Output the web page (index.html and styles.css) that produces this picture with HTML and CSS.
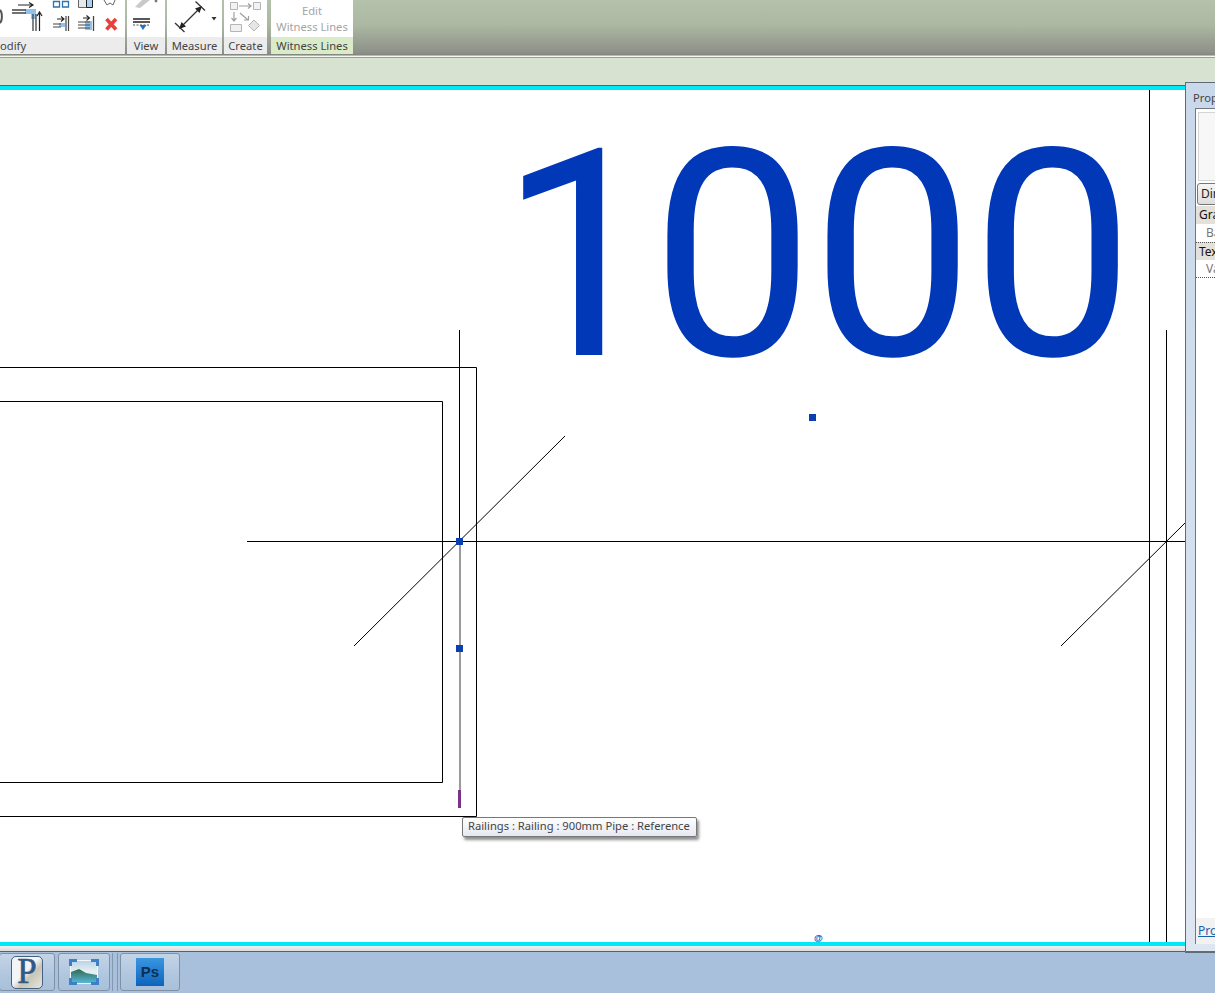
FILE: index.html
```html
<!DOCTYPE html>
<html lang="en">
<head>
<meta charset="utf-8">
<title>Witness Lines</title>
<link rel="stylesheet" href="styles.css">
</head>
<body>
<div class="app">
  <header class="ribbon">
    <section class="panel panel-modify">
      <div class="panel-body">
        <svg class="icon-fill" viewBox="0 0 125 37" width="125" height="37">
          <path d="M0 10a3 7 0 0 1 0 13" fill="none" stroke="#555" stroke-width="2"/>
          <path d="M18 5h15M29 2.500l4 2.500-4 2.500" fill="none" stroke="#222" stroke-width="1.200"/>
          <path d="M25 9h11v10h-5v-5h-6z" fill="#8fc3ee"/>
          <path d="M12 10h14M12 13h14" stroke="#444" stroke-width="1.300"/>
          <path d="M33 14v17M36 14v17" stroke="#444" stroke-width="1.300"/>
          <path d="M39.500 31v-18M37 16l2.500-4 2.500 4" fill="none" stroke="#222" stroke-width="1.200"/>
          <path d="M53.500 1.500h6v5.500h-6zM62.500 1.500h6v5.500h-6z" fill="#fff" stroke="#2a73b5" stroke-width="1.300"/>
          <path d="M78.500 0v7.500h8v-7.500" fill="#e6e9ec" stroke="#666"/>
          <path d="M86.500 0v7.500h6v-7.500" fill="#a9d0f0" stroke="#222"/>
          <path d="M104 0l3 5 3-2 3 2 2-5" fill="#fff" stroke="#666"/>
          <path d="M57 19h7M61 16.500l3 2.500-3 2.500" fill="none" stroke="#222" stroke-width="1.100"/>
          <path d="M59 23h6v4h-6z" fill="#8fc3ee"/>
          <path d="M53 24h8M53 27h8" stroke="#444"/>
          <path d="M66 16v15M68.500 16v15" stroke="#444" stroke-width="1.200"/>
          <path d="M83 18h6M86.500 15.500l3 2.500-3 2.500" fill="none" stroke="#222" stroke-width="1.100"/>
          <path d="M85 21h7v9h-7z" fill="#8fc3ee"/>
          <path d="M78 22h12M78 25h12M78 28h12" stroke="#444"/>
          <path d="M93.500 16v15" stroke="#444" stroke-width="1.300"/>
          <path d="M106.500 19l9.500 10.500M116 19l-9.500 10.500" stroke="#e8403a" stroke-width="3.600"/>
        </svg>
      </div>
      <div class="panel-label panel-label-cut">odify</div>
    </section>
    <section class="panel panel-view">
      <div class="panel-body">
        <svg class="icon-fill" viewBox="0 0 38 37" width="38" height="37">
          <path d="M8 7l7-7h8l-10 8z" fill="#c9c9c9"/>
          <circle cx="29" cy="1" r="1.400" fill="#777"/>
          <path d="M6 19h17M6 22h17" stroke="#222" stroke-width="1.300"/>
          <path d="M6 25h17" stroke="#555" stroke-dasharray="2 1.500"/>
          <path d="M12.500 25h7l-3.500 5z" fill="#1e73c8"/>
        </svg>
      </div>
      <div class="panel-label">View</div>
    </section>
    <section class="panel panel-measure">
      <div class="panel-body">
        <svg class="icon-fill" viewBox="0 0 55 37" width="55" height="37">
          <path d="M13 28L34 7" stroke="#333" stroke-width="1.200"/>
          <path d="M12 29l2.500-7 4.500 4.500zM35 6l-7 2.500 4.500 4.500z" fill="#222"/>
          <path d="M8 23l9.500 9M28.500 1.500l9.500 9" stroke="#333" stroke-width="1.300"/>
          <path d="M44.500 17h5l-2.500 3.500z" fill="#333"/>
        </svg>
      </div>
      <div class="panel-label">Measure</div>
    </section>
    <section class="panel panel-create">
      <div class="panel-body">
        <svg class="icon-fill" viewBox="0 0 43 37" width="43" height="37">
          <path d="M6.500 2.500h7v7h-7zM29.500 2.500h7v7h-7z" fill="#f2f2f2" stroke="#b5b5b5"/>
          <path d="M15 6h12M24 3.500l3 2.500-3 2.500M10 12v9M7.500 18l2.500 3 2.500-3M16 13l8 7M20 20h4.500v-4" fill="none" stroke="#a0a0a0" stroke-width="1.200"/>
          <path d="M6.500 24.500h11v7h-11z" fill="#f0f0f0" stroke="#b5b5b5"/>
          <path d="M30 20l5.500 5.500-5.500 5.500-5.500-5.500z" fill="#e6e6e6" stroke="#b5b5b5"/>
        </svg>
      </div>
      <div class="panel-label">Create</div>
    </section>
    <section class="panel panel-witness">
      <div class="panel-body witness-body">Edit<br>Witness Lines</div>
      <div class="panel-label panel-label-green">Witness Lines</div>
    </section>
  </header>

  <div class="ribbon-edge"></div>
  <div class="options-bar"></div>

  <main class="viewport">
    <svg class="drawing" viewBox="0 0 1185 852" width="1185" height="852">
      <text class="dim-text" x="499" y="265"><tspan>1</tspan><tspan dx="-8">000</tspan></text>
      <g class="ln">
        <path d="M0 277.500H476.500V726.500H0"/>
        <path d="M0 311.500H442.500V692.500H0"/>
        <path d="M459.500 240V451"/>
        <path d="M247 451.500H1185"/>
        <path d="M354 556L565 346"/>
        <path d="M1061 556L1185 433"/>
        <path d="M1149.500 0V852"/>
        <path d="M1166.500 240V852"/>
      </g>
      <path class="ln-grey" d="M460 451V700"/>
      <path class="ln-purple" d="M459.500 700V718"/>
      <rect class="grip" x="456" y="448" width="7" height="7"/>
      <rect class="grip" x="456" y="555" width="7" height="7"/>
      <rect class="grip" x="809" y="324" width="7" height="7"/>
      <text class="at" x="814" y="851">@</text>
    </svg>
  </main>

  <div class="status-edge"></div>

  <footer class="taskbar">
    <button class="task task-p" type="button">
      <span class="p-logo">P</span>
    </button>
    <button class="task task-photo" type="button">
      <svg viewBox="0 0 32 28" width="32" height="28">
        <defs>
          <linearGradient id="sky" x1="0" y1="0" x2="0" y2="1">
            <stop offset="0" stop-color="#b9d4ea"/>
            <stop offset="0.45" stop-color="#e6eef0"/>
            <stop offset="1" stop-color="#e4f2f4"/>
          </linearGradient>
          <linearGradient id="sea" x1="0" y1="0" x2="0" y2="1">
            <stop offset="0" stop-color="#2f6a50"/>
            <stop offset="1" stop-color="#58b8d8"/>
          </linearGradient>
        </defs>
        <rect x="2" y="2" width="28" height="24" fill="#f4f7fa"/>
        <rect x="3" y="3" width="26" height="22" fill="url(#sky)"/>
        <path d="M3 14l8-3 7 4 11 2v8H3z" fill="url(#sea)"/>
        <path d="M1 1h8v3H4v4H1zM31 1h-8v3h5v4h3zM1 27h8v-3H4v-4H1zM31 27h-8v-3h5v-4h3z" fill="#3f7fc4"/>
      </svg>
    </button>
    <span class="task-sep"></span>
    <button class="task task-ps" type="button"><span class="ps-logo">Ps</span></button>
  </footer>

  <aside class="props">
    <div class="props-title">Properties</div>
    <div class="props-inner">
      <div class="props-preview"></div>
      <div class="props-select">Dimensions</div>
      <div class="props-group">Graphics</div>
      <div class="props-row">Baseline</div>
      <div class="props-group props-group-dotted">Text</div>
      <div class="props-row props-row-dotted">Value</div>
      <div class="props-spacer"></div>
      <a class="props-link">Properties help</a>
    </div>
  </aside>

  <div class="tooltip">Railings : Railing : 900mm Pipe : Reference</div>
</div>
</body>
</html>
```
FILE: styles.css
```css
* { box-sizing: border-box; }
html, body { margin: 0; padding: 0; }
body { width: 1215px; height: 993px; overflow: hidden; background: #fff; font-family: "Noto Sans", "Open Sans", sans-serif; }
.app { position: relative; width: 1215px; height: 993px; overflow: hidden; display: flex; flex-direction: column; }

.ribbon { height: 55px; display: flex; flex: none; gap: 2px; background: linear-gradient(#b5c2ab 0, #acb8a2 25px, #8e918a 52px, #84877f 55px); }
.panel { height: 54px; display: flex; flex-direction: column; background: #fff; }
.panel-body { height: 37px; flex: none; overflow: hidden; }
.icon-fill { display: block; }
.panel-label { height: 17px; background: #ececec; color: #444; font-size: 11.200px; line-height: 18px; text-align: center; white-space: nowrap; }
.panel-label-cut { text-align: left; }
.panel-modify { width: 125px; }
.panel-view { width: 38px; }
.panel-measure { width: 55px; }
.panel-create { width: 43px; }
.panel-witness { width: 82px; margin-left: 2px; }
.witness-body { color: #a4a4a4; font-size: 11.200px; line-height: 16px; text-align: center; padding-top: 3px; }
.panel-label-green { background: #d9ebc9; }

.ribbon-edge { height: 3px; flex: none; background: #f5f7f1; border-top: 1px solid #a6c88e; border-bottom: 1px solid #9a9f96; }
.options-bar { height: 28px; flex: none; background: #d8e2d0; border-bottom: 1px solid #5b6660; }

.viewport { height: 860px; flex: none; background: #fff; border-top: 4px solid #00e8f6; border-bottom: 4px solid #00e8f6; overflow: hidden; }
.drawing { display: block; }
.dim-text { font-family: Roboto, "Liberation Sans", sans-serif; font-size: 290px; letter-spacing: -2.900px; fill: #0038b8; }
.ln path { fill: none; stroke: #000; stroke-width: 1; }
.ln-grey { stroke: #9a9a9a; stroke-width: 2; fill: none; }
.ln-purple { stroke: #7a3386; stroke-width: 3; fill: none; }
.grip { fill: #0a3fb0; }
.at { font-family: "Liberation Sans", Arial, sans-serif; font-size: 9px; font-weight: 700; fill: #0a3fb0; }

.status-edge { height: 6px; flex: none; background: linear-gradient(#f0f0f0, #dcdcdc); border-bottom: 1px solid #55606a; }
.taskbar { flex: 1; display: flex; align-items: stretch; padding: 1px 0 2px 0; background: #a8c0dc; }
.task { padding: 0; display: flex; align-items: center; justify-content: center; background: linear-gradient(#c4d4e6, #b0c6df 60%, #a9c0da); border: 1px solid #7f91a6; border-radius: 3px; }
.task-p { width: 56px; margin-left: -1px; }
.task-photo { width: 52px; margin-left: 3px; }
.task-sep { width: 6px; border-left: 1px solid #8498b0; border-right: 1px solid #8498b0; margin: 0 2px; }
.task-ps { width: 60px; }
.p-logo { width: 32px; height: 33px; display: block; border: 1.500px solid #44617f; border-radius: 5px; background: linear-gradient(135deg, #f2f5f8 45%, #c9c4b4 62%, #e6e6e2); color: #2f5a88; font-family: "Liberation Serif", serif; font-weight: 400; font-size: 35px; line-height: 30px; text-align: center; -webkit-text-stroke: 0.600px #2f5a88; }
.ps-logo { width: 28px; height: 28px; display: block; background: linear-gradient(#3a96e0, #0d63bb); color: #0b2f55; font-family: "Liberation Sans", sans-serif; font-weight: 700; font-size: 15px; line-height: 28px; text-align: center; }

.props { position: absolute; left: 1185px; top: 82px; width: 40px; height: 871px; background: linear-gradient(#c9d8ea, #dde6f1); border: 1px solid #5f6b76; border-bottom-width: 2px; padding: 0 0 0 9px; display: flex; flex-direction: column; overflow: hidden; }
.props-title { height: 25px; color: #444; font-size: 11.200px; line-height: 30px; margin-left: -2px; white-space: nowrap; flex: none; }
.props-inner { width: 60px; height: 836px; flex: none; display: flex; flex-direction: column; border-left: 1px solid #6d7883; border-top: 1px solid #6d7883; background: #fff; font-size: 12px; white-space: nowrap; }
.props-preview { height: 69px; margin: 3px 0 2px 2px; background: #f7f7f7; border: 1px solid #d5d5d5; flex: none; }
.props-select { height: 22px; flex: none; border: 1px solid #777; border-radius: 3px; background: linear-gradient(#f5f5f5, #dedede); line-height: 20px; padding-left: 3px; margin: 0 0 1px 1px; color: #222; }
.props-group { height: 18px; flex: none; background: #e4e0da; line-height: 18px; padding-left: 3px; color: #111; }
.props-row { height: 18px; flex: none; line-height: 18px; padding-left: 10px; color: #777; }
.props-group-dotted { border-top: 1px dotted #555; }
.props-row-dotted { border-bottom: 1px dotted #555; }
.props-spacer { flex: 1; }
.props-link { height: 26px; flex: none; background: #f2f2f2; color: #1a5fb0; text-decoration: underline; line-height: 26px; padding-left: 2px; }

.tooltip { position: absolute; left: 462px; top: 817px; width: 235px; height: 20px; border: 1px solid #777; border-radius: 2px; background: linear-gradient(#fff, #e6e8f0); box-shadow: 2px 3px 3px rgba(0,0,0,.45); color: #444; font-size: 11.200px; line-height: 16px; padding-left: 5px; white-space: nowrap; }
```
